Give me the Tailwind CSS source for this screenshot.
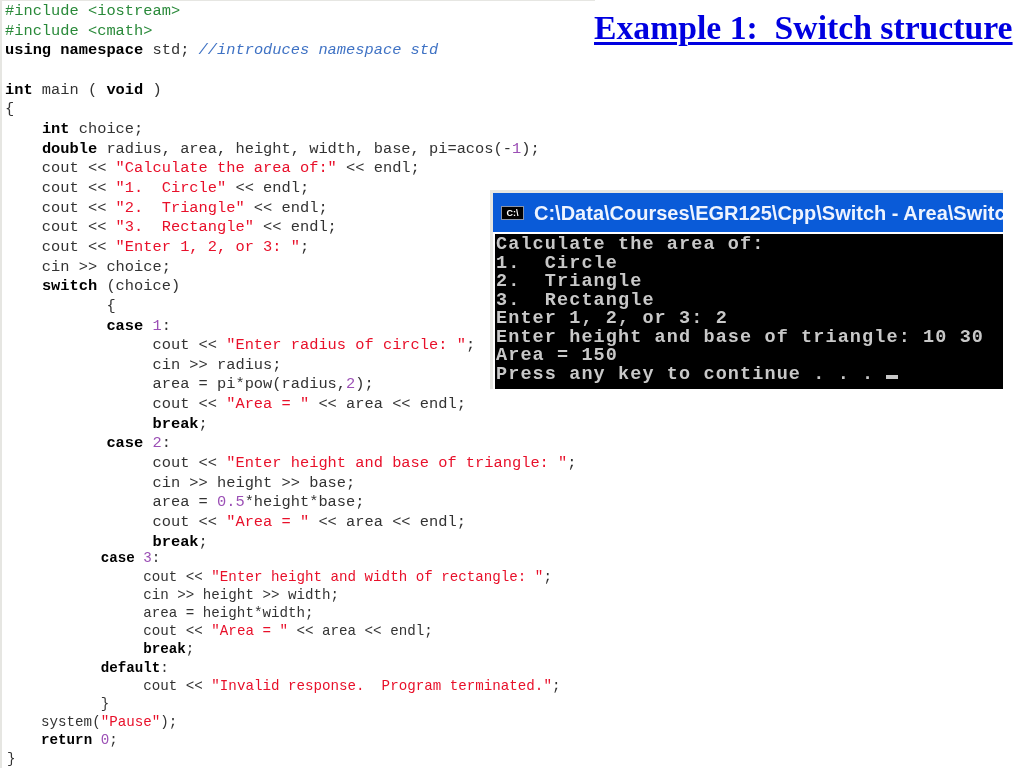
<!DOCTYPE html>
<html lang="en">
<head>
<meta charset="UTF-8">
<title>Example 1: Switch structure</title>
<script src="https://cdn.jsdelivr.net/npm/@tailwindcss/browser@4"></script>
</head>
<body class="bg-white">
<div class="flex w-[1024px] h-[768px] overflow-hidden">
  <!-- source listing, long lines run under the right column -->
  <div class="w-[490px] shrink-0 h-[768px] pt-[1px] border-t border-l-2 border-[#e6e6e2] text-[#333] font-['Liberation_Mono',monospace] blur-[0.4px]">
<pre class="pl-[3px] text-[15.37px] leading-[19.65px] font-['Liberation_Mono',monospace]"><span class="text-[#2a8a3a]">#include &lt;iostream&gt;</span>
<span class="text-[#2a8a3a]">#include &lt;cmath&gt;</span>
<b class="text-black">using namespace</b> std; <i class="text-[#3f72c4]">//introduces namespace std</i>

<b class="text-black">int</b> main ( <b class="text-black">void</b> )
{
    <b class="text-black">int</b> choice;
    <b class="text-black">double</b> radius, area, height, width, base, pi=acos(-<span class="text-[#9b4fb5]">1</span>);
    cout &lt;&lt; <span class="text-[#e8102a]">"Calculate the area of:"</span> &lt;&lt; endl;
    cout &lt;&lt; <span class="text-[#e8102a]">"1.  Circle"</span> &lt;&lt; endl;
    cout &lt;&lt; <span class="text-[#e8102a]">"2.  Triangle"</span> &lt;&lt; endl;
    cout &lt;&lt; <span class="text-[#e8102a]">"3.  Rectangle"</span> &lt;&lt; endl;
    cout &lt;&lt; <span class="text-[#e8102a]">"Enter 1, 2, or 3: "</span>;
    cin &gt;&gt; choice;
    <b class="text-black">switch</b> (choice)
           {
           <b class="text-black">case</b> <span class="text-[#9b4fb5]">1</span>:
                cout &lt;&lt; <span class="text-[#e8102a]">"Enter radius of circle: "</span>;
                cin &gt;&gt; radius;
                area = pi*pow(radius,<span class="text-[#9b4fb5]">2</span>);
                cout &lt;&lt; <span class="text-[#e8102a]">"Area = "</span> &lt;&lt; area &lt;&lt; endl;
                <b class="text-black">break</b>;
           <b class="text-black">case</b> <span class="text-[#9b4fb5]">2</span>:
                cout &lt;&lt; <span class="text-[#e8102a]">"Enter height and base of triangle: "</span>;
                cin &gt;&gt; height &gt;&gt; base;
                area = <span class="text-[#9b4fb5]">0.5</span>*height*base;
                cout &lt;&lt; <span class="text-[#e8102a]">"Area = "</span> &lt;&lt; area &lt;&lt; endl;
                <b class="text-black">break</b>;</pre>
<pre class="pl-[5px] mt-[-3px] text-[14.2px] leading-[18.2px] font-['Liberation_Mono',monospace]">           <b class="text-black">case</b> <span class="text-[#9b4fb5]">3</span>:
                cout &lt;&lt; <span class="text-[#e8102a]">"Enter height and width of rectangle: "</span>;
                cin &gt;&gt; height &gt;&gt; width;
                area = height*width;
                cout &lt;&lt; <span class="text-[#e8102a]">"Area = "</span> &lt;&lt; area &lt;&lt; endl;
                <b class="text-black">break</b>;
           <b class="text-black">default</b>:
                cout &lt;&lt; <span class="text-[#e8102a]">"Invalid response.  Program terminated."</span>;
           }
    system(<span class="text-[#e8102a]">"Pause"</span>);
    <b class="text-black">return</b> <span class="text-[#9b4fb5]">0</span>;
}</pre>
  </div>

  <div class="flex-1 min-w-0">
    <div class="h-[190px]">
      <div class="w-[105px] h-px bg-[#e6e6e2]"></div>
      <h1 class="pl-[104px] pt-[7px] text-[33.7px] leading-[40px] font-bold whitespace-pre text-[#0000e0] underline decoration-[3px] underline-offset-[3px] font-['Liberation_Serif',serif] blur-[0.3px]">Example 1:  Switch structure</h1>
    </div>
    <!-- console window -->
    <div class="w-[513px] bg-[#e6e6e2] pl-[3px] pt-[3px]">
      <div class="bg-[#0a5bd8] h-[39px] flex items-center pl-[8px] overflow-hidden blur-[0.4px]">
        <div class="w-[23px] h-[14px] bg-black border border-[#8a94a8] text-white text-[9px] leading-[12px] font-bold text-center font-['Liberation_Sans',sans-serif] shrink-0">C:\</div>
        <span class="ml-[10px] text-[20px] text-[#eef4ff] font-bold whitespace-pre font-['Liberation_Sans',sans-serif]">C:\Data\Courses\EGR125\Cpp\Switch - Area\Switch</span>
      </div>
      <div class="bg-white pt-[2px] pl-[2px]">
        <pre class="h-[155px] bg-black text-[#c8c8c8] font-bold text-[18.5px] tracking-[1.1px] leading-[18.5px] pl-[1px] pt-[2px] overflow-hidden font-['Liberation_Mono',monospace] blur-[0.4px]">Calculate the area of:
1.  Circle
2.  Triangle
3.  Rectangle
Enter 1, 2, or 3: 2
Enter height and base of triangle: 10 30
Area = 150
Press any key to continue . . . <span class="inline-block w-[12px] h-[4px] bg-[#c8c8c8] align-baseline"></span></pre>
      </div>
    </div>
  </div>
</div>
</body>
</html>
